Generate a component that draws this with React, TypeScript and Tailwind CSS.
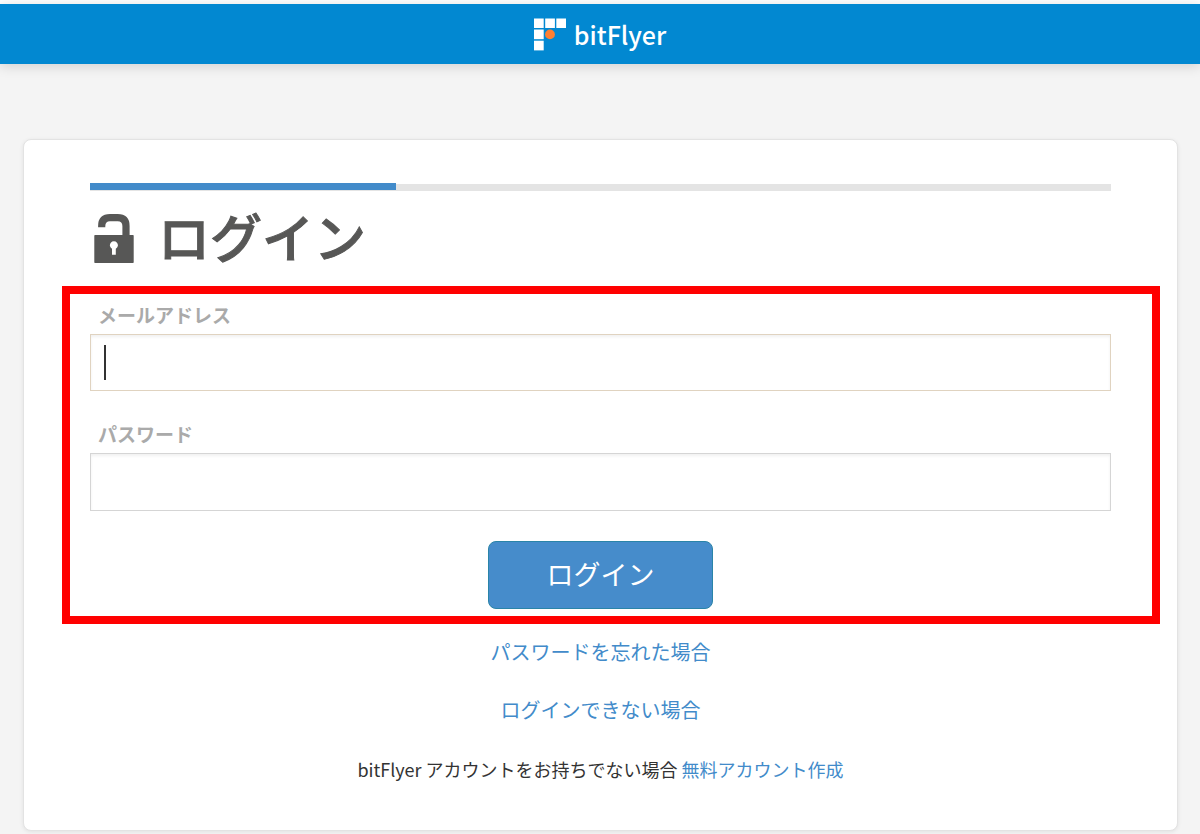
import React, { useState } from "react";

const PROGRESS = 30;

export default function App() {
    return (
        <div className="min-h-screen bg-[#f4f4f4] pt-1 font-['Noto_Sans_CJK_JP',sans-serif] text-[#333] shadow-[inset_0_4px_0_#fff]">
            <Header />
            <main className="mt-[75px] mr-[22px] ml-[23px] rounded-lg border border-[#e3e3e3] bg-white px-[66px] pt-[43px] pb-[45px] shadow-[0_1px_4px_rgba(0,0,0,0.08)]">
                <ProgressBar percent={PROGRESS} />
                <h1 className="flex items-start gap-6 py-[23px] pl-1 text-[52px] leading-[44px] font-medium text-[#575756] [-webkit-text-stroke:1px_#575756]">
                    <UnlockIcon />
                    ログイン
                </h1>
                <LoginForm />
                <nav className="mt-[13px] flex flex-col items-center gap-7 text-xl leading-[30px]">
                    <a href="#forgot" className="text-[#428bca]">パスワードを忘れた場合</a>
                    <a href="#help" className="text-[#428bca]">ログインできない場合</a>
                    <p className="text-lg leading-8">
                        bitFlyer アカウントをお持ちでない場合 <a href="#signup" className="text-[#428bca]">無料アカウント作成</a>
                    </p>
                </nav>
            </main>
        </div>
    )
}

function Header() {
    return (
        <header className="flex h-[60px] items-center justify-center gap-2 bg-[#0288d1] shadow-[0_2px_12px_rgba(0,0,0,0.15)]">
            <LogoMark />
            <span className="text-[25px] leading-[60px] font-medium text-white">bitFlyer</span>
        </header>
    )
}

function ProgressBar({ percent }: {
    percent: number;
}) {
    return (
        <div className="h-2 border-t border-white bg-[#e4e4e4]">
            <div
                className="-mt-px h-[7px] bg-[#428bca]"
                style={{ width: `${percent}%` }}
            />
        </div>
    )
}

function LoginForm() {
    const [email, setEmail] = useState("");
    const [password, setPassword] = useState("");

    return (
        <form
            className="-mr-[49px] -ml-7 border-8 border-[#f00] pt-[6px] pr-[41px] pb-[7px] pl-5"
            onSubmit={e => e.preventDefault()}
        >
            <label htmlFor="email" className="block pl-2 text-[19px] leading-[30px] font-bold text-[#aaa]">
                メールアドレス
            </label>
            <div className="relative mt-1">
                <input
                    id="email"
                    type="email"
                    className="block h-[57px] w-full border border-[#e0d3c0] bg-white px-3 text-2xl caret-transparent shadow-[inset_0_2px_3px_rgba(0,0,0,0.06)] outline-none"
                    value={email}
                    onChange={e => setEmail(e.target.value)}
                />
                {!email && <span className="pointer-events-none absolute top-[11px] left-[14px] h-[35px] w-0.5 bg-[#333]" />}
            </div>
            <label htmlFor="password" className="mt-7 block pl-2 text-[19px] leading-[30px] font-bold text-[#aaa]">
                パスワード
            </label>
            <input
                id="password"
                type="password"
                className="mt-1 block h-[58px] w-full border border-[#d5d5d5] bg-white px-3 text-2xl shadow-[inset_0_2px_3px_rgba(0,0,0,0.06)] outline-none"
                value={password}
                onChange={e => setPassword(e.target.value)}
            />
            <button
                type="submit"
                className="mx-auto mt-[30px] block h-[68px] w-[225px] cursor-pointer rounded-lg border border-[#2a84a8] bg-[#468ccb] pb-0.5 text-[27px] text-white"
            >
                ログイン
            </button>
        </form>
    )
}

function LogoMark() {
    return (
        <svg width="32" height="33" viewBox="0 0 32 33" aria-hidden="true">
            <g fill="#fff">
                <rect x="0" y="0.5" width="9.7" height="9.5" />
                <rect x="11.2" y="0.5" width="9.7" height="9.5" />
                <rect x="22.3" y="0.5" width="9.7" height="9.5" />
                <rect x="0" y="11.5" width="9.7" height="9.7" />
                <rect x="0" y="22.7" width="9.7" height="9.7" />
            </g>
            <circle cx="16" cy="16.4" r="4.9" fill="#ff7f32" />
        </svg>
    )
}

function UnlockIcon() {
    return (
        <svg width="40" height="49" viewBox="0 0 40 49" aria-hidden="true">
            <path d="M7.7 13.2V12Q7.7 3.7 16 3.7H23.7Q32 3.7 32 12V23" fill="none" stroke="#575756" strokeWidth="7.2" />
            <path
                fillRule="evenodd"
                fill="#575756"
                d="M1 21H39Q39.7 21 39.7 21.7V48.3Q39.7 49 39 49H1Q0.3 49 0.3 48.3V21.7Q0.3 21 1 21ZM18 40.7H21.8V34.8A4 4 0 1 0 18 34.8Z"
            />
        </svg>
    )
}
